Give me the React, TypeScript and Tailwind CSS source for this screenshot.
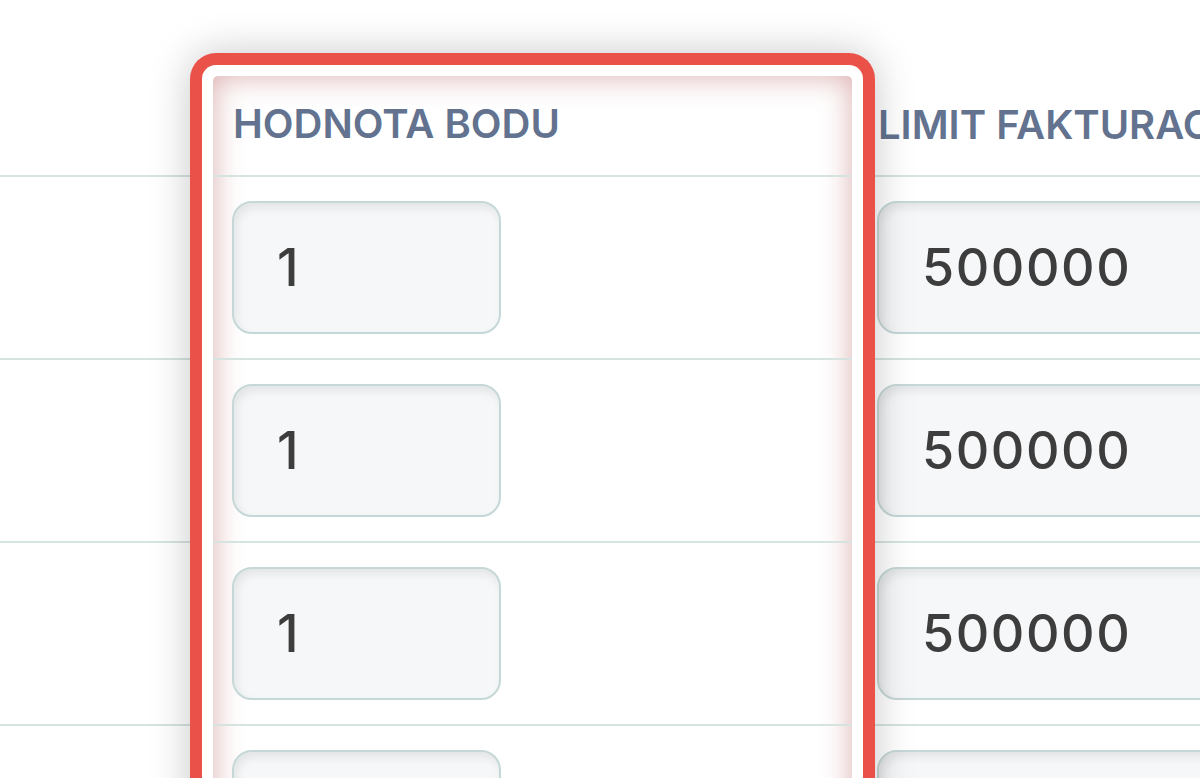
import React from "react";

const rows = [0, 1, 2, 3];

function Field({ value, wide }: { value: string; wide?: boolean }) {
  return (
    <div
      className={`flex h-[133px] items-center rounded-[20px] border-2 border-[#c6d7d7] bg-[#f5f7f8] pl-[43px] text-[52px] font-medium leading-none text-[#3d3d3d] shadow-[inset_3px_5px_10px_rgba(0,0,0,0.08)] ${
        wide ? "w-[420px]" : "w-[269px]"
      }`}
    >
      <span className="tracking-[0.03em]">{value}</span>
    </div>
  );
}

export default function App() {
  return (
    <div className="flex h-[778px] w-[1200px] items-start overflow-hidden bg-white font-['Inter','Liberation_Sans',sans-serif]">
      {/* column 1 */}
      <div className="w-[190px] shrink-0">
        <div className="h-[177px] border-b-2 border-[#d5e3e1]" />
        {rows.map((r) => (
          <div key={r} className="h-[183px] border-b-2 border-[#d5e3e1]" />
        ))}
      </div>

      {/* column 2 (highlighted) */}
      <div className="relative z-10 mt-[53px] w-[685px] shrink-0 rounded-t-[26px] border-[12px] border-b-0 border-[#ea5148] bg-white p-[11px] pb-0 shadow-[0_0_40px_rgba(0,0,0,0.22)]">
        <div className="rounded-t-[5px] shadow-[inset_0_0_30px_rgba(170,60,60,0.42)]">
          <div className="h-[101px] border-b-2 border-[#d5e3e1] pl-[20px] pt-[28px]">
            <span className="text-[40px] font-semibold leading-none text-[#62728f]">
              HODNOTA BODU
            </span>
          </div>
          {rows.map((r) => (
            <div key={r} className="h-[183px] border-b-2 border-[#d5e3e1] pl-[19px] pt-[24px]">
              <Field value="1" />
            </div>
          ))}
        </div>
      </div>

      {/* column 3 */}
      <div className="w-[500px] shrink-0">
        <div className="h-[177px] whitespace-nowrap border-b-2 border-[#d5e3e1] pl-[3px] pt-[105px]">
          <span className="text-[40px] font-semibold leading-none text-[#62728f]">
            LIMIT FAKTURACE
          </span>
        </div>
        {rows.map((r) => (
          <div key={r} className="h-[183px] border-b-2 border-[#d5e3e1] pl-[2px] pt-[24px]">
            <Field value="500000" wide />
          </div>
        ))}
      </div>
    </div>
  );
}
